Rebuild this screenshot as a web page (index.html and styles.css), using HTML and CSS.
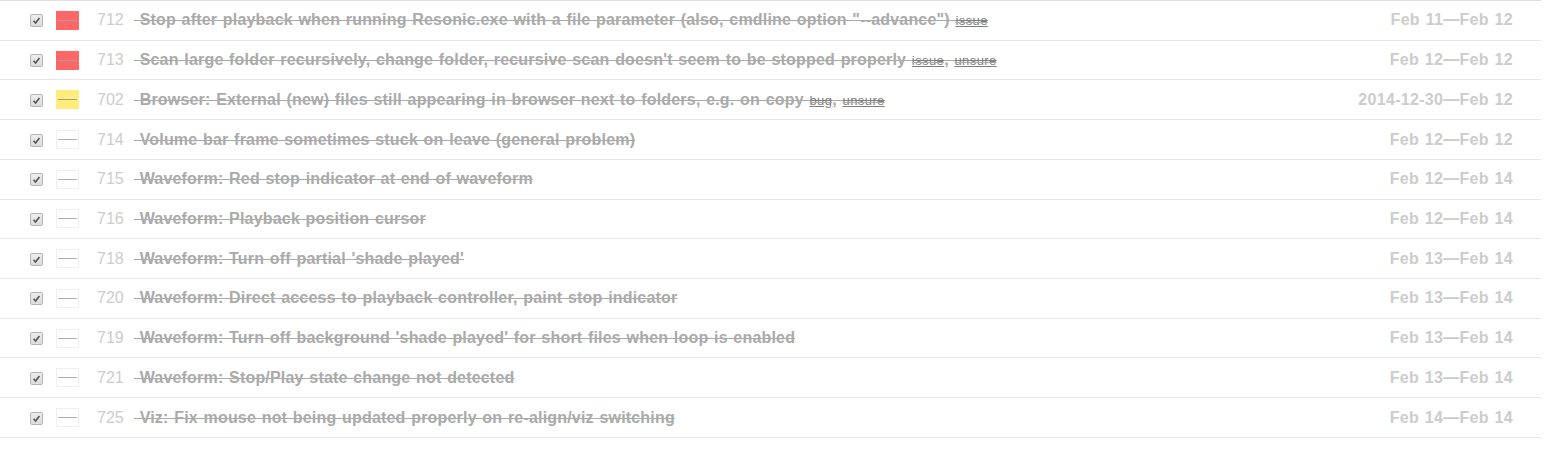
FILE: index.html
```html
<!DOCTYPE html>
<html>
<head>
<meta charset="utf-8">
<link rel="stylesheet" href="styles.css">
</head>
<body>
<ul class="tasks">
  <li class="task">
    <span class="check"><svg viewBox="0 0 13 13" width="13" height="13"><path d="M3 6.8 L5.4 9.4 L10 3.6" fill="none" stroke="#555" stroke-width="2"/></svg></span>
    <span class="prio prio-red"><i></i></span>
    <span class="num">712</span>
    <span class="title"> Stop after playback when running Resonic.exe with a file parameter (also, cmdline option "--advance") <span class="tag">issue</span></span>
    <span class="date">Feb 11—Feb 12</span>
  </li>
  <li class="task">
    <span class="check"><svg viewBox="0 0 13 13" width="13" height="13"><path d="M3 6.8 L5.4 9.4 L10 3.6" fill="none" stroke="#555" stroke-width="2"/></svg></span>
    <span class="prio prio-red"><i></i></span>
    <span class="num">713</span>
    <span class="title"> Scan large folder recursively, change folder, recursive scan doesn't seem to be stopped properly <span class="tag">issue</span>, <span class="tag">unsure</span></span>
    <span class="date">Feb 12—Feb 12</span>
  </li>
  <li class="task">
    <span class="check"><svg viewBox="0 0 13 13" width="13" height="13"><path d="M3 6.8 L5.4 9.4 L10 3.6" fill="none" stroke="#555" stroke-width="2"/></svg></span>
    <span class="prio prio-yellow"><i></i></span>
    <span class="num">702</span>
    <span class="title"> Browser: External (new) files still appearing in browser next to folders, e.g. on copy <span class="tag">bug</span>, <span class="tag">unsure</span></span>
    <span class="date">2014-12-30—Feb 12</span>
  </li>
  <li class="task">
    <span class="check"><svg viewBox="0 0 13 13" width="13" height="13"><path d="M3 6.8 L5.4 9.4 L10 3.6" fill="none" stroke="#555" stroke-width="2"/></svg></span>
    <span class="prio"><i></i></span>
    <span class="num">714</span>
    <span class="title"> Volume bar frame sometimes stuck on leave (general problem)</span>
    <span class="date">Feb 12—Feb 12</span>
  </li>
  <li class="task">
    <span class="check"><svg viewBox="0 0 13 13" width="13" height="13"><path d="M3 6.8 L5.4 9.4 L10 3.6" fill="none" stroke="#555" stroke-width="2"/></svg></span>
    <span class="prio"><i></i></span>
    <span class="num">715</span>
    <span class="title"> Waveform: Red stop indicator at end of waveform</span>
    <span class="date">Feb 12—Feb 14</span>
  </li>
  <li class="task">
    <span class="check"><svg viewBox="0 0 13 13" width="13" height="13"><path d="M3 6.8 L5.4 9.4 L10 3.6" fill="none" stroke="#555" stroke-width="2"/></svg></span>
    <span class="prio"><i></i></span>
    <span class="num">716</span>
    <span class="title"> Waveform: Playback position cursor</span>
    <span class="date">Feb 12—Feb 14</span>
  </li>
  <li class="task">
    <span class="check"><svg viewBox="0 0 13 13" width="13" height="13"><path d="M3 6.8 L5.4 9.4 L10 3.6" fill="none" stroke="#555" stroke-width="2"/></svg></span>
    <span class="prio"><i></i></span>
    <span class="num">718</span>
    <span class="title"> Waveform: Turn off partial 'shade played'</span>
    <span class="date">Feb 13—Feb 14</span>
  </li>
  <li class="task">
    <span class="check"><svg viewBox="0 0 13 13" width="13" height="13"><path d="M3 6.8 L5.4 9.4 L10 3.6" fill="none" stroke="#555" stroke-width="2"/></svg></span>
    <span class="prio"><i></i></span>
    <span class="num">720</span>
    <span class="title"> Waveform: Direct access to playback controller, paint stop indicator</span>
    <span class="date">Feb 13—Feb 14</span>
  </li>
  <li class="task">
    <span class="check"><svg viewBox="0 0 13 13" width="13" height="13"><path d="M3 6.8 L5.4 9.4 L10 3.6" fill="none" stroke="#555" stroke-width="2"/></svg></span>
    <span class="prio"><i></i></span>
    <span class="num">719</span>
    <span class="title"> Waveform: Turn off background 'shade played' for short files when loop is enabled</span>
    <span class="date">Feb 13—Feb 14</span>
  </li>
  <li class="task">
    <span class="check"><svg viewBox="0 0 13 13" width="13" height="13"><path d="M3 6.8 L5.4 9.4 L10 3.6" fill="none" stroke="#555" stroke-width="2"/></svg></span>
    <span class="prio"><i></i></span>
    <span class="num">721</span>
    <span class="title"> Waveform: Stop/Play state change not detected</span>
    <span class="date">Feb 13—Feb 14</span>
  </li>
  <li class="task">
    <span class="check"><svg viewBox="0 0 13 13" width="13" height="13"><path d="M3 6.8 L5.4 9.4 L10 3.6" fill="none" stroke="#555" stroke-width="2"/></svg></span>
    <span class="prio"><i></i></span>
    <span class="num">725</span>
    <span class="title"> Viz: Fix mouse not being updated properly on re-align/viz switching</span>
    <span class="date">Feb 14—Feb 14</span>
  </li>
</ul>
</body>
</html>
```

FILE: styles.css
```css
html, body {
  margin: 0;
  padding: 0;
  background: #fff;
}

body {
  font-family: "Liberation Sans", Arial, sans-serif;
}

.tasks {
  list-style: none;
  margin: 0;
  padding: 0;
  width: 1541px;
  border-top: 1px solid #e0e0e0;
}

.task {
  display: flex;
  align-items: center;
  height: 38.73px;
  border-bottom: 1px solid #e6e6e6;
  padding: 0 28px 0 30px;
}

.check {
  flex: none;
  width: 11px;
  height: 11px;
  border: 1px solid #b5b5b5;
  border-radius: 2px;
  background: linear-gradient(#ededed, #dcdcdc);
  display: flex;
  align-items: center;
  justify-content: center;
  margin-top: 1px;
}

.check svg {
  width: 11px;
  height: 11px;
}

.prio {
  flex: none;
  box-sizing: border-box;
  width: 23px;
  height: 19px;
  margin-left: 13px;
  border: 1px solid #efefef;
  background: #fff;
  display: flex;
  align-items: center;
  justify-content: center;
}

.prio i {
  display: block;
  width: 19px;
  height: 1px;
  background: #b0b0b0;
}

.prio-red {
  background: #ff6666;
  border-color: #ff6666;
}

.prio-red i {
  background: #a0a0a0;
}

.prio-yellow {
  background: #ffec7a;
  border-color: #ffec7a;
}

.prio-yellow i {
  background: #a0a0a0;
}

.num {
  flex: none;
  margin-left: 18px;
  width: 37px;
  font-size: 16px;
  color: #cccccc;
}

.title {
  flex: 1;
  font-size: 16px;
  font-weight: bold;
  color: #aaaaaa;
  letter-spacing: 0.19px;
  word-spacing: 1px;
  text-decoration: line-through;
  white-space: pre;
}

.tag {
  font-size: 13px;
  font-weight: normal;
  color: #808080;
  letter-spacing: 0.4px;
  word-spacing: 0;
  text-decoration: underline line-through;
}

.date {
  flex: none;
  font-size: 16px;
  font-weight: bold;
  color: #cccccc;
  letter-spacing: 0.3px;
  word-spacing: 1px;
  text-align: right;
}
```
